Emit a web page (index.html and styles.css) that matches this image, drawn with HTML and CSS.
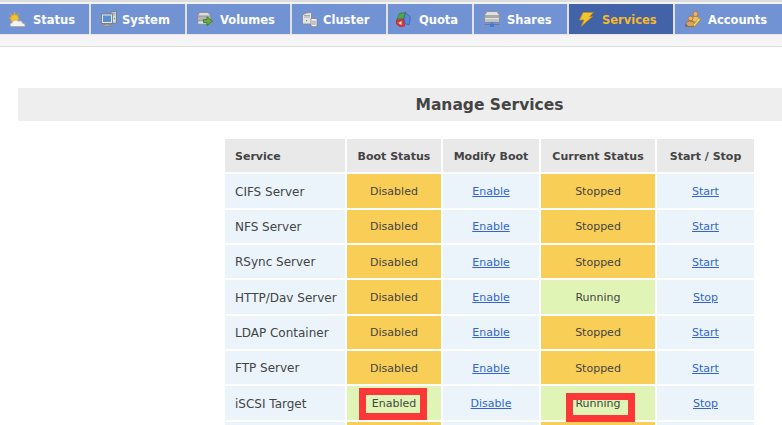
FILE: index.html
```html
<!DOCTYPE html>
<html lang="en">
<head>
    <meta charset="UTF-8">
    <meta name="viewport" content="width=device-width, initial-scale=1.0">
    <title>Manage Services</title>
    <link rel="stylesheet" href="styles.css">
</head>
<body>

<div class="page">
    <ul class="nav">
        <li class="tab tab-status"><a href="#">
            <svg class="icon" width="17" height="15" viewBox="0 0 17 15">
                <path d="M5.500 0v2M1 1.500l1.500 1.500M0 6h1.500M10 1.500L8.500 3" stroke="#eeb52a"/>
                <circle cx="5.500" cy="6.500" r="4" fill="#f6c22c" stroke="#e09a18" stroke-width=".8"/>
                <path d="M3 14.500c-2.500 0-2.500-3.500 0-3.500 .5-3 4.500-4 6.500-1.800 2-1 4 .2 4 2 3 0 3.500 3.300 1 3.300z" fill="#f4f3ee" stroke="#a9a99c" stroke-width=".8"/>
            </svg>
            Status</a></li>
        <li class="tab tab-system"><a href="#">
            <svg class="icon" width="16" height="16" viewBox="0 0 16 16">
                <path d="M10 1l5.500-.5V12l-5.500.5z" fill="#d5d8dc" stroke="#6f747b" stroke-width=".8"/>
                <path d="M11 2.500h3.500M11 4h3.500" stroke="#9a9ea4" stroke-width=".7"/>
                <rect x=".5" y="3" width="11" height="9.500" fill="#e4e7ea" stroke="#6f747b" stroke-width=".8"/>
                <rect x="2" y="4.500" width="8" height="6.500" fill="#5b8fd0"/>
                <path d="M4 13h4v1h2.500v1.500h-9V14H4z" fill="#a4a8ad" stroke="#777" stroke-width=".4"/>
                <rect x="13" y="7" width="1.200" height="1.200" fill="#56a83c"/>
            </svg>
            System</a></li>
        <li class="tab tab-volumes"><a href="#">
            <svg class="icon" width="16" height="14" viewBox="0 0 16 14">
                <path d="M2.500 .5h8.500l3 3.500v2H.5V4z" fill="#dcdddd" stroke="#85888a" stroke-width=".8"/>
                <rect x=".5" y="4" width="13.500" height="5" fill="#b4b7b9" stroke="#85888a" stroke-width=".8"/>
                <rect x="1" y="9" width="12.500" height="3" fill="#e6e6e6" stroke="#8d8f91" stroke-width=".6"/>
                <path d="M6.500 7.500h3.500V4.800l5.500 4.200-5.500 4.500v-2.800H6.500z" fill="#69ab3c" stroke="#35701e" stroke-width=".8"/>
            </svg>
            Volumes</a></li>
        <li class="tab tab-cluster"><a href="#">
            <svg class="icon" width="16" height="15" viewBox="0 0 16 15">
                <path d="M.5 3L4 1 9.500.5V12H.5z" fill="#e3e4e5" stroke="#83868a" stroke-width=".8"/>
                <path d="M2 3.500h6M2 5h6" stroke="#9a9da0" stroke-width=".8"/>
                <rect x="4" y="8" width="1.200" height="1.200" fill="#56a83c"/>
                <path d="M9 6.500h6V14c-1.500 1-4.500 1-6 0z" fill="#f4f4f4" stroke="#7e8185" stroke-width=".8"/>
                <path d="M11 8.500v4.500M13 8.500v4.500" stroke="#8d9094"/>
            </svg>
            Cluster</a></li>
        <li class="tab tab-quota"><a href="#">
            <svg class="icon" width="15" height="15" viewBox="0 0 15 15">
                <path d="M1 7l2.500-5.500L9.500 .5 7.500 7z" fill="#4fa64a" stroke="#2f7a30" stroke-width=".7"/>
                <path d="M9.500 .5l5 4.500-1.500 8-4-1.500-1-4.500z" fill="#5e86d6" stroke="#3a5ba8" stroke-width=".7"/>
                <path d="M.5 8l7-.5 1 6.500-5 .5-3-2.500z" fill="#dc3b3b" stroke="#a82222" stroke-width=".7"/>
                <path d="M2.500 11l3-2v4z" fill="#f4e6e6"/>
            </svg>
            Quota</a></li>
        <li class="tab tab-shares"><a href="#">
            <svg class="icon" width="16" height="16" viewBox="0 0 16 16">
                <path d="M3 .5h10L15.500 4v7H.5V4z" fill="#dfdfdf" stroke="#85888a" stroke-width=".8"/>
                <rect x="1" y="4" width="14" height="3" fill="#a8aaac"/>
                <rect x="1" y="8" width="14" height="2" fill="#c3c5c7"/>
                <path d="M8 11v2M.5 13.500h15" stroke="#6c7a90"/>
                <rect x="6" y="12.500" width="4" height="3.500" fill="#3f78d6"/>
            </svg>
            Shares</a></li>
        <li class="tab tab-services active"><a href="#">
            <svg class="icon" width="15" height="15" viewBox="0 0 15 15">
                <path d="M4 .5h10.500l-4 4h3L2 14.500l3-6.500H.5z" fill="#f3c42f" stroke="#b98a14" stroke-width=".8"/>
            </svg>
            Services</a></li>
        <li class="tab tab-accounts"><a href="#">
            <svg class="icon" width="16" height="16" viewBox="0 0 16 16">
                <circle cx="10.500" cy="3" r="2.500" fill="#eeb070" stroke="#a86a2a" stroke-width=".7"/>
                <path d="M7 7c1-2 6.500-2 7.500 0v4H7z" fill="#e8c070" stroke="#a87a2a" stroke-width=".7"/>
                <circle cx="5.500" cy="7.500" r="2.400" fill="#eeb070" stroke="#a86a2a" stroke-width=".7"/>
                <path d="M.5 15.500c0-4.500 2-5.500 4.500-5.500s4.500 1 4.500 3v2.500z" fill="#dba35a" stroke="#8a5a20" stroke-width=".7"/>
                <path d="M.5 12.500l3 3h-3z" fill="#3f68c0"/>
                <path d="M8 14l6-7 1.500 1.500-6 7z" fill="#f3d76a" stroke="#a88a20" stroke-width=".6"/>
            </svg>
            Accounts</a></li>
    </ul>
    <div class="subnav"></div>

    <div class="content">
        <h1>Manage Services</h1>

        <table class="services">
            <thead>
                <tr>
                    <th class="col-service">Service</th>
                    <th class="col-boot">Boot Status</th>
                    <th class="col-modify">Modify Boot</th>
                    <th class="col-current">Current Status</th>
                    <th class="col-action">Start / Stop</th>
                </tr>
            </thead>
            <tbody>
                <tr>
                    <td class="name">CIFS Server</td>
                    <td class="off">Disabled</td>
                    <td class="action"><a href="#">Enable</a></td>
                    <td class="off">Stopped</td>
                    <td class="action"><a href="#">Start</a></td>
                </tr>
                <tr>
                    <td class="name">NFS Server</td>
                    <td class="off">Disabled</td>
                    <td class="action"><a href="#">Enable</a></td>
                    <td class="off">Stopped</td>
                    <td class="action"><a href="#">Start</a></td>
                </tr>
                <tr>
                    <td class="name">RSync Server</td>
                    <td class="off">Disabled</td>
                    <td class="action"><a href="#">Enable</a></td>
                    <td class="off">Stopped</td>
                    <td class="action"><a href="#">Start</a></td>
                </tr>
                <tr>
                    <td class="name">HTTP/Dav Server</td>
                    <td class="off">Disabled</td>
                    <td class="action"><a href="#">Enable</a></td>
                    <td class="on">Running</td>
                    <td class="action"><a href="#">Stop</a></td>
                </tr>
                <tr>
                    <td class="name">LDAP Container</td>
                    <td class="off">Disabled</td>
                    <td class="action"><a href="#">Enable</a></td>
                    <td class="off">Stopped</td>
                    <td class="action"><a href="#">Start</a></td>
                </tr>
                <tr>
                    <td class="name">FTP Server</td>
                    <td class="off">Disabled</td>
                    <td class="action"><a href="#">Enable</a></td>
                    <td class="off">Stopped</td>
                    <td class="action"><a href="#">Start</a></td>
                </tr>
                <tr>
                    <td class="name">iSCSI Target</td>
                    <td class="on marked"><span class="mark mark-boot"></span>Enabled</td>
                    <td class="action"><a href="#">Disable</a></td>
                    <td class="on marked"><span class="mark mark-current"></span>Running</td>
                    <td class="action"><a href="#">Stop</a></td>
                </tr>
                <tr>
                    <td class="name"></td>
                    <td class="off"></td>
                    <td class="action"></td>
                    <td class="off"></td>
                    <td class="action"></td>
                </tr>
            </tbody>
        </table>
    </div>
</div>

</body>
</html>
```

FILE: styles.css
```css
html, body {
    margin: 0;
}
body {
    font-family: "DejaVu Sans", Verdana, sans-serif;
    font-size: 11px;
    color: #444;
    background-color: #fff;
}
.page {
    width: 782px;
    height: 425px;
    overflow: hidden;
}
.nav {
    display: flex;
    gap: 2px;
    margin: 0;
    padding: 4px 0 0;
    list-style: none;
    background: linear-gradient(#ddd 2px, #f2f2f2 2px, #f2f2f2 4px, #e2e2e2 4px);
}
.tab {
    flex: none;
    box-sizing: border-box;
    height: 30px;
    padding-left: 10px;
    background-color: #7293d3;
}
.tab a {
    display: flex;
    align-items: center;
    box-sizing: border-box;
    height: 100%;
    padding-top: 1px;
    font-size: 11.5px;
    font-weight: bold;
    color: #fff;
    text-decoration: none;
}
.tab .icon {
    flex: none;
    margin-top: -1px;
    margin-right: 7px;
}
.tab.active {
    background-color: #4363a8;
}
.tab.active a {
    color: #f5b82e;
}
.tab-status { width: 89px; padding-left: 9px; }
.tab-system { width: 94px; }
.tab-volumes { width: 103px; }
.tab-cluster { width: 94px; }
.tab-quota { width: 84px; padding-left: 8px; }
.tab-shares { width: 93px; }
.tab-services { width: 104px; }
.tab-accounts { width: 107px; }
.tab-system .icon,
.tab-cluster .icon {
    margin-right: 5px;
}
.tab-quota .icon,
.tab-services .icon {
    margin-right: 8px;
}
.subnav {
    height: 12px;
    background: linear-gradient(#e4e4e4, #f4f4f4 15%, #f6f6f6);
    border-bottom: 1px solid #ddd;
}
.content {
    width: 943px;
    padding: 41px 18px 0;
}
h1 {
    margin: 0 0 16px;
    height: 33px;
    line-height: 35px;
    font-size: 15.5px;
    text-align: center;
    color: #444;
    background-color: #eee;
}
.services {
    margin: 0 auto;
    border-collapse: separate;
    border-spacing: 2px;
}
.services th {
    height: 32.4px;
    padding: 1px 10px 0;
    background-color: #e9e9e9;
    white-space: nowrap;
}
.services th.col-service {
    width: 100px;
    text-align: left;
}
.col-boot { width: 74px; }
.col-modify { width: 76px; }
.col-current { width: 94px; }
.col-action { width: 77px; }
.services td {
    height: 32.33px;
    padding: 1px 10px 0;
    background-color: #ebf4fb;
    white-space: nowrap;
}
.services td.name {
    padding-right: 0;
    font-size: 12px;
}
.services td.off,
.services td.on,
.services td.action {
    text-align: center;
}
.services td.off {
    background-color: #f8ce57;
}
.services td.on {
    background-color: #e0f5b5;
}
.services a {
    color: #3366cc;
}
.marked {
    position: relative;
}
/* red highlight boxes drawn over the screenshot */
.mark {
    position: absolute;
    border: 7px solid #fb3737;
    box-sizing: border-box;
}
.mark-boot {
    left: 12px;
    top: 1.6px;
    width: 68px;
    height: 32px;
}
.mark-current {
    left: 25px;
    top: 6.6px;
    width: 69px;
    height: 29px;
}
```
